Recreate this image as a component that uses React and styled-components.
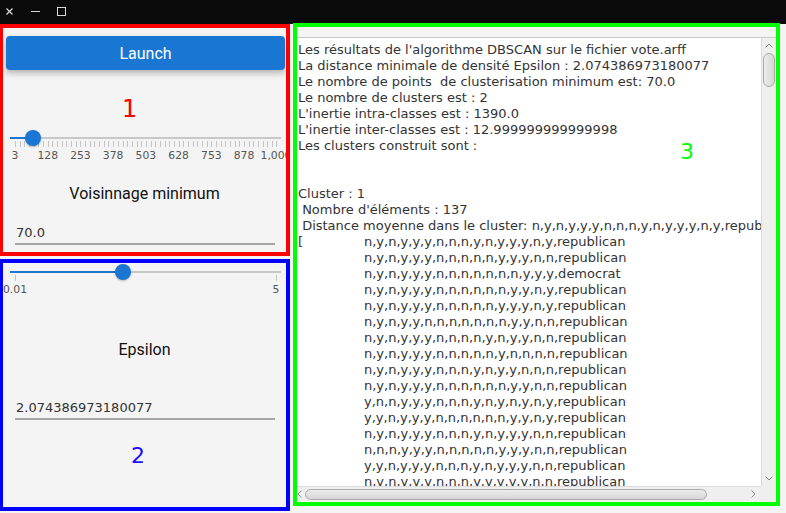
import React from 'react';
import styled, { createGlobalStyle } from 'styled-components';

const Global = createGlobalStyle`
  html, body { margin: 0; padding: 0; background: #f4f4f4; overflow: hidden; }
  #root { width: 786px; height: 513px; }
`;

const Window = styled.div`
  width: 786px;
  height: 513px;
  overflow: hidden;
  background: #f4f4f4;
  display: flex;
  flex-direction: column;
  font-family: "DejaVu Sans", sans-serif;
`;

const TitleBar = styled.div`
  height: 24px;
  flex: none;
  background: #0a0a0a;
  display: flex;
  align-items: flex-start;
  padding-left: 6px;
  box-sizing: border-box;
`;

const TitleIcon = styled.svg`
  display: block;
  flex: none;
  margin-right: ${(p) => p.$gap || 0}px;
`;

const Body = styled.div`
  display: flex;
  flex: 1;
  min-height: 0;
`;

const LeftCol = styled.div`
  width: 290px;
  flex: none;
  display: flex;
  flex-direction: column;
  gap: 3px;
`;

const Frame = styled.div`
  box-sizing: border-box;
  height: ${(p) => p.$h}px;
  flex: none;
  border: 4px solid ${(p) => p.$color};
  border-left-width: 3px;
  display: flex;
  flex-direction: column;
  overflow: hidden;
`;

const LaunchButton = styled.button`
  margin: 8px 1px 0 3px;
  height: 34px;
  flex: none;
  border: none;
  border-radius: 4px;
  background: #1976d2;
  color: #fff;
  font-family: Roboto, "DejaVu Sans", sans-serif;
  font-size: 16px;
  padding: 0;
  box-shadow: 0 3px 6px rgba(0, 0, 0, 0.28);
`;

const Marker = styled.div`
  flex: none;
  height: 30px;
  line-height: 30px;
  margin-top: ${(p) => p.$mt}px;
  padding-left: ${(p) => p.$x}px;
  font-family: "DejaVu Sans", sans-serif;
  font-size: ${(p) => p.$size}px;
  color: ${(p) => p.$color};
`;

const FloatingMarker = styled.div`
  position: absolute;
  left: ${(p) => p.$x}px;
  top: ${(p) => p.$y}px;
  font-family: "DejaVu Sans", sans-serif;
  font-size: ${(p) => p.$size}px;
  line-height: 30px;
  color: ${(p) => p.$color};
`;

const SliderWrap = styled.div`
  position: relative;
  flex: none;
  height: 33px;
  margin-top: ${(p) => p.$mt}px;
`;

const Track = styled.div`
  position: absolute;
  left: 7px;
  right: 5px;
  top: 8px;
  height: 2px;
  background: #c8c8c8;
`;

const Fill = styled.div`
  position: absolute;
  left: 7px;
  top: 8px;
  height: 2px;
  background: #1976d2;
`;

const Thumb = styled.div`
  position: absolute;
  top: 1px;
  width: 16px;
  height: 16px;
  margin-left: -8px;
  border-radius: 50%;
  background: #1976d2;
  box-shadow: 0 1px 2px rgba(0, 0, 0, 0.25);
`;

const Ticks = styled.svg`
  position: absolute;
  left: 0;
  top: 12px;
`;

const TickLabel = styled.span`
  position: absolute;
  top: 20px;
  transform: translateX(-50%);
  font-family: "DejaVu Sans", sans-serif;
  font-size: 10.8px;
  line-height: 13px;
  color: #555;
  white-space: nowrap;
`;

const FieldLabel = styled.div`
  flex: none;
  margin-top: ${(p) => p.$mt}px;
  height: 20px;
  line-height: 20px;
  text-align: center;
  font-family: Roboto, "DejaVu Sans", sans-serif;
  font-size: 16px;
  color: #111;
`;

const Field = styled.div`
  flex: none;
  margin: ${(p) => p.$mt}px 0 0 12px;
  width: 260px;
  box-sizing: border-box;
  padding: 0 0 2px 1px;
  border-bottom: 2px solid #a6a6a6;
  font-size: 13px;
  line-height: 16px;
  color: #333;
`;

const GreenFrame = styled.div`
  position: relative;
  box-sizing: border-box;
  margin: -1px 0 0 3px;
  width: 487px;
  height: 483px;
  flex: none;
  border: 4px solid #00ff00;
  display: flex;
  flex-direction: column;
  background: #f4f4f4;
`;

const TopStrip = styled.div`
  height: 10px;
  flex: none;
`;

const ScrollPane = styled.div`
  flex: none;
  border-top: 1px solid #c8c8c8;
  display: grid;
  grid-template-columns: 1fr 15px;
  grid-template-rows: 448px 15px;
`;

const Viewport = styled.div`
  background: #fff;
  overflow: hidden;
  box-sizing: border-box;
  padding: 4px 0 0 1px;
  font-size: 13px;
  line-height: 16px;
  color: #333;
`;

const Line = styled.div`
  height: 16px;
  white-space: pre;
`;

const DataRow = styled.div`
  height: 16px;
  display: flex;
  white-space: pre;
`;

const RowPrefix = styled.span`
  width: 66px;
  flex: none;
`;

const VBar = styled.div`
  background: #efefef;
  border-left: 1px solid #dcdcdc;
  display: flex;
  flex-direction: column;
  align-items: center;
`;

const HBar = styled.div`
  background: #efefef;
  border-top: 1px solid #dcdcdc;
  display: flex;
  align-items: center;
`;

const Corner = styled.div`
  background: #efefef;
`;

const ArrowBox = styled.div`
  flex: none;
  width: ${(p) => p.$w}px;
  height: ${(p) => p.$h}px;
  display: flex;
  align-items: center;
  justify-content: ${(p) => p.$justify || 'center'};
`;

const BarThumb = styled.div`
  flex: none;
  box-sizing: border-box;
  width: ${(p) => p.$w}px;
  height: ${(p) => p.$h}px;
  border: 1px solid #a9a9a9;
  border-radius: 6px;
  background: ${(p) =>
    p.$vertical
      ? 'linear-gradient(to right, #ececec, #d6d6d6)'
      : 'linear-gradient(to bottom, #ececec, #d6d6d6)'};
`;

const Spacer = styled.div`
  flex: 1;
`;

function Chevron({ dir }) {
  const paths = {
    up: 'M0.5 4.5 L4 1 L7.5 4.5',
    down: 'M0.5 0.5 L4 4 L7.5 0.5',
    left: 'M4.5 0.5 L1 4 L4.5 7.5',
    right: 'M0.5 0.5 L4 4 L0.5 7.5',
  };
  const vertical = dir === 'up' || dir === 'down';
  return (
    <svg width={vertical ? 8 : 5} height={vertical ? 5 : 8}>
      <path d={paths[dir]} fill="none" stroke="#8a8a8a" strokeWidth="1" />
    </svg>
  );
}

function Slider({ min, max, value, ticks, labels, mt }) {
  const x0 = 12;
  const span = 261;
  const pos = (v) => x0 + ((v - min) / (max - min)) * span;
  const tp = pos(value);
  return (
    <SliderWrap $mt={mt}>
      <Track />
      <Fill style={{ width: tp - 7 }} />
      <Ticks width="283" height="6">
        {ticks.map((t, i) => {
          const x = Math.round(pos(t)) + 0.5;
          return <line key={i} x1={x} x2={x} y1="0" y2="6" stroke="#c4c4c4" strokeWidth="1" />;
        })}
      </Ticks>
      {labels.map((l) => (
        <TickLabel key={l.text} style={{ left: pos(l.value) }}>
          {l.text}
        </TickLabel>
      ))}
      <Thumb style={{ left: tp }} />
    </SliderWrap>
  );
}

const s1Ticks = [];
for (let v = 3; v <= 1000.001; v += 125 / 7) s1Ticks.push(v);
s1Ticks.push(1000);
const s1Labels = [3, 128, 253, 378, 503, 628, 753, 878].map((v) => ({ value: v, text: String(v) }));
s1Labels.push({ value: 1000, text: '1,000' });

const header = [
  "Les résultats de l'algorithme DBSCAN sur le fichier vote.arff",
  'La distance minimale de densité Epsilon : 2.074386973180077',
  'Le nombre de points  de clusterisation minimum est: 70.0',
  'Le nombre de clusters est : 2',
  "L'inertie intra-classes est : 1390.0",
  "L'inertie inter-classes est : 12.999999999999998",
  'Les clusters construit sont :',
  '',
  '',
  'Cluster : 1',
  " Nombre d'éléments : 137",
  ' Distance moyenne dans le cluster: n,y,n,y,y,y,n,n,n,y,n,y,y,y,n,y,republican',
];

const rows = [
  'n,y,n,y,y,y,n,n,n,y,n,y,y,y,n,y,republican',
  'n,y,n,y,y,y,n,n,n,n,n,y,y,y,n,n,republican',
  'n,y,n,y,y,y,n,n,n,n,n,n,n,y,y,y,democrat',
  'n,y,n,y,y,y,n,n,n,n,n,n,y,y,n,y,republican',
  'n,y,n,y,y,y,n,n,n,n,n,y,y,y,n,y,republican',
  'n,y,n,y,y,n,n,n,n,n,n,n,y,y,n,n,republican',
  'n,y,n,y,y,y,n,n,n,n,y,n,y,y,n,n,republican',
  'n,y,n,y,y,y,n,n,n,n,n,y,n,n,n,n,republican',
  'n,y,n,y,y,y,n,n,n,y,n,y,y,n,n,n,republican',
  'n,y,n,y,y,y,n,n,n,n,n,n,y,y,n,n,republican',
  'y,n,n,y,y,y,n,n,n,y,n,y,n,y,n,y,republican',
  'y,y,n,y,y,y,n,n,n,n,n,n,y,y,n,y,republican',
  'n,y,n,y,y,y,n,n,n,y,n,y,y,y,n,n,republican',
  'n,n,n,y,y,y,n,n,n,n,n,y,y,y,n,n,republican',
  'y,y,n,y,y,y,n,n,n,y,n,y,y,y,n,n,republican',
  'n,y,n,y,y,y,n,n,n,y,y,y,y,y,n,n,republican',
  'n,y,n,y,y,y,n,n,n,n,n,y,y,y,n,n,republican',
];

export default function App() {
  return (
    <>
      <Global />
      <Window>
        <TitleBar>
          <TitleIcon width="8" height="24" $gap={17}>
            <path d="M0.5 8.5 L6.5 14.5 M6.5 8.5 L0.5 14.5" stroke="#d8d8d8" strokeWidth="1.3" />
          </TitleIcon>
          <TitleIcon width="9" height="24" $gap={17}>
            <path d="M0 11.5 H9" stroke="#d8d8d8" strokeWidth="1" />
          </TitleIcon>
          <TitleIcon width="9" height="24">
            <rect x="0.5" y="7.5" width="8" height="8" fill="none" stroke="#d8d8d8" strokeWidth="1" />
          </TitleIcon>
        </TitleBar>
        <Body>
          <LeftCol>
            <Frame $h={232} $color="#ff0000">
              <LaunchButton>Launch</LaunchButton>
              <Marker $mt={24} $x={119} $size={24} $color="#ff0000">1</Marker>
              <Slider min={3} max={1000} value={70} ticks={s1Ticks} labels={s1Labels} mt={5} />
              <FieldLabel $mt={22}>Voisinnage minimum</FieldLabel>
              <Field $mt={21}>70.0</Field>
            </Frame>
            <Frame $h={252} $color="#0000ff">
              <Slider
                min={0.01}
                max={5}
                value={2.074386973180077}
                ticks={[0.01, 5]}
                labels={[
                  { value: 0.01, text: '0.01' },
                  { value: 5, text: '5' },
                ]}
                mt={0}
              />
              <FieldLabel $mt={44}>Epsilon</FieldLabel>
              <Field $mt={40}>2.074386973180077</Field>
              <Marker $mt={21} $x={128} $size={22} $color="#1a0dff">2</Marker>
            </Frame>
          </LeftCol>
          <GreenFrame>
            <TopStrip />
            <ScrollPane>
              <Viewport>
                {header.map((t, i) => (
                  <Line key={'h' + i}>{t}</Line>
                ))}
                {rows.map((r, i) => (
                  <DataRow key={'r' + i}>
                    <RowPrefix>{i === 0 ? '[' : ''}</RowPrefix>
                    {r}
                  </DataRow>
                ))}
              </Viewport>
              <VBar>
                <ArrowBox $w={14} $h={15}>
                  <Chevron dir="up" />
                </ArrowBox>
                <BarThumb $vertical $w={12} $h={34} />
                <Spacer />
                <ArrowBox $w={14} $h={15}>
                  <Chevron dir="down" />
                </ArrowBox>
              </VBar>
              <HBar>
                <ArrowBox $w={8} $h={14} $justify="flex-start">
                  <Chevron dir="left" />
                </ArrowBox>
                <BarThumb $w={402} $h={11} />
                <Spacer />
                <ArrowBox $w={15} $h={14}>
                  <Chevron dir="right" />
                </ArrowBox>
              </HBar>
              <Corner />
            </ScrollPane>
            <FloatingMarker $x={383} $y={110} $size={22} $color="#00ff00">3</FloatingMarker>
          </GreenFrame>
        </Body>
      </Window>
    </>
  );
}
